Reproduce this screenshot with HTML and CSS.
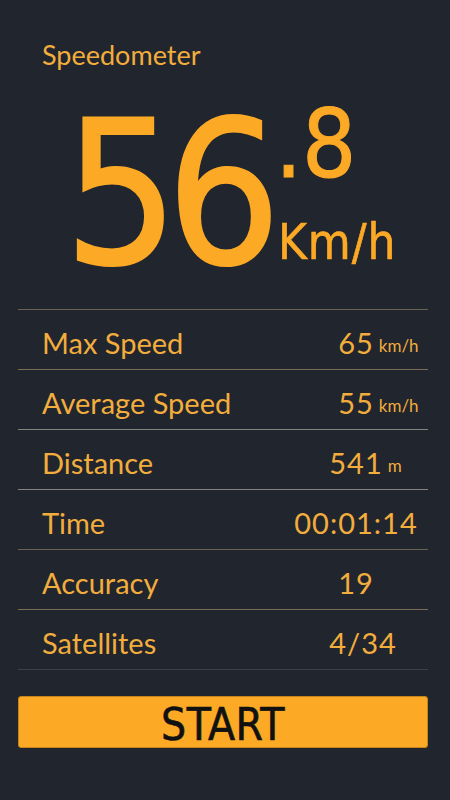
FILE: index.html
```html
<!DOCTYPE html>
<html lang="en">
<head>
  <meta charset="UTF-8">
  <title>Speedometer</title>
  <link rel="stylesheet" href="styles.css">
</head>
<body>

  <div class="app">
    <h1 class="title">Speedometer</h1>

    <div class="speed">
      <div class="speed-int">56</div>
      <div class="speed-side">
        <div class="speed-dec">.8</div>
        <div class="speed-unit">Km/h</div>
      </div>
    </div>

    <ul class="stats">
      <li class="stat line-warm">
        <span class="stat-label">Max Speed</span>
        <span class="stat-value"><span class="num">65<span class="unit">km/h</span></span></span>
      </li>
      <li class="stat line-light">
        <span class="stat-label">Average Speed</span>
        <span class="stat-value"><span class="num">55<span class="unit">km/h</span></span></span>
      </li>
      <li class="stat line-light">
        <span class="stat-label">Distance</span>
        <span class="stat-value"><span class="num">541<span class="unit">m</span></span></span>
      </li>
      <li class="stat">
        <span class="stat-label">Time</span>
        <span class="stat-value"><span class="num">00:01:14</span></span>
      </li>
      <li class="stat line-warm">
        <span class="stat-label">Accuracy</span>
        <span class="stat-value"><span class="num">19</span></span>
      </li>
      <li class="stat line-dim">
        <span class="stat-label">Satellites</span>
        <span class="stat-value sats"><span class="num">4/34</span></span>
      </li>
    </ul>

    <button class="start-btn">START</button>
  </div>

</body>
</html>
```

FILE: styles.css
```css
:root {
  --bg:     #21252d;
  --orange: #fca926;
  --text:   #f2ad3d;
  --line:   #6a6252;
}

* { box-sizing: border-box; }

body {
  margin: 0;
  background: var(--bg);
  color: var(--text);
  font-family: "Lato", "Open Sans", sans-serif;
}

.app {
  width: 450px;
  height: 800px;
  padding: 0 22px 0 18px;
}

.title {
  margin: 0;
  padding: 38px 0 0 24px;
  font-size: 27px;
  font-weight: 400;
  line-height: 34px;
}

/* big speed readout */
.speed {
  display: flex;
  color: var(--orange);
  font-family: "DejaVu Sans Condensed", "DejaVu Sans", sans-serif;
  padding-left: 46px;
  height: 237px;
}
.speed-int {
  font-size: 200px;
  line-height: 1;
  margin-top: 22px;
  letter-spacing: -12px;
  -webkit-text-stroke: 2px var(--orange);
}
.speed-side {
  display: flex;
  flex-direction: column;
  margin-left: 6px;
}
.speed-dec {
  font-size: 95px;
  line-height: 1;
  margin-top: 25px;
  -webkit-text-stroke: 1px var(--orange);
}
.speed-unit {
  font-size: 49px;
  line-height: 1;
  margin: 26px 0 0 3px;
  letter-spacing: 1px;
  -webkit-text-stroke: 0.6px var(--orange);
}

/* stats table */
.stats {
  list-style: none;
  margin: 0;
  padding: 0;
  border-top: 1px solid var(--line);
}
.stat {
  display: flex;
  align-items: center;
  height: 60px;
  padding: 6px 0 0 24px;
  border-bottom: 1px solid var(--line);
  font-size: 29px;
}
.line-light { border-bottom-color: #85837e; }
.line-warm  { border-bottom-color: #7a6c55; }
.line-dim   { border-bottom-color: #3e4047; }
.stat-label { flex: 1; }
.stat-value {
  width: 130px;
  margin-right: 7px;
  text-align: center;
  letter-spacing: 1px;
}
.stat-value.sats { margin-right: 0; }
.num {
  position: relative;
}
.unit {
  position: absolute;
  left: 100%;
  bottom: 4px;
  margin-left: 5px;
  font-size: 17px;
  letter-spacing: 0;
}

.start-btn {
  display: block;
  width: 100%;
  height: 52px;
  margin-top: 26px;
  border: 1px solid #c98418;
  border-radius: 3px;
  background: var(--orange);
  color: #111;
  font-family: "DejaVu Sans Condensed", "DejaVu Sans", sans-serif;
  font-size: 44px;
  line-height: 50px;
  padding: 3px 0 0;
  letter-spacing: 0.5px;
  -webkit-text-stroke: 0.6px #111;
}
```
